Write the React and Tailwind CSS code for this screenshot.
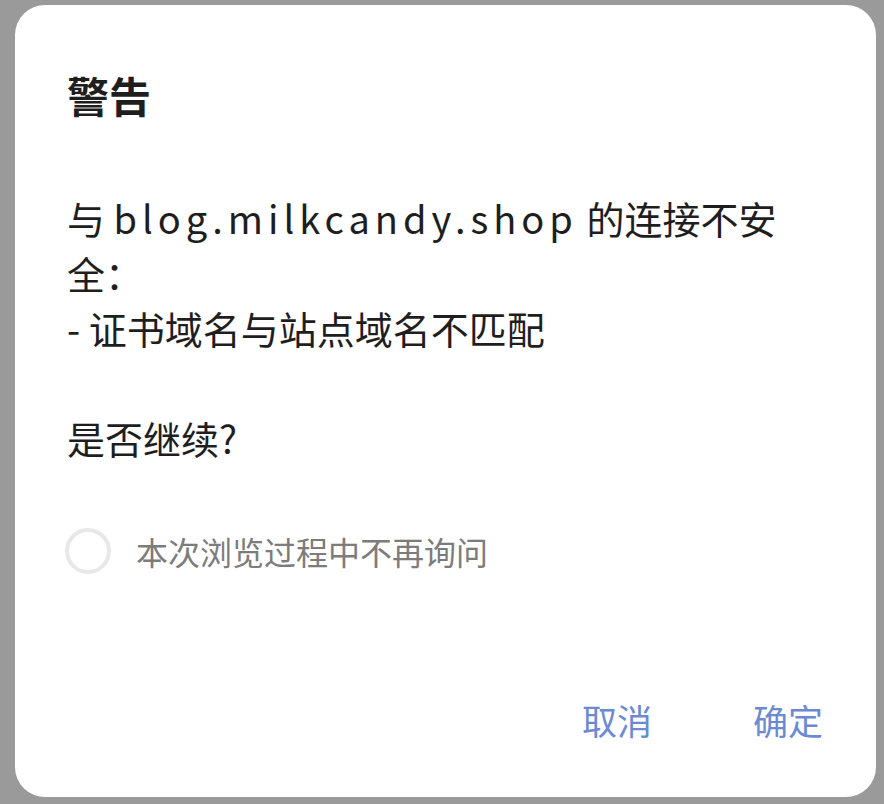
export default function App() {
  const font = { fontFamily: '"Noto Sans CJK SC", "Noto Sans", sans-serif' };

  return (
    <div className="h-[804px] w-[884px] bg-[#9a9a9a] pt-[5px] pl-[15px]" style={font}>
      <div className="flex h-[792px] w-[861px] flex-col rounded-[30px] bg-white pt-[62px] pb-[49px] pl-[52px] pr-[53px]">
        <h1 className="text-[42px] font-bold leading-[56px] text-[#1e1e1e]">警告</h1>

        <div className="mt-[67px] text-[38px] leading-[55px] text-[#1e1e1e]">
          <p>
            与 <span className="tracking-[5px]">blog.milkcandy.shop</span> 的连接不安
          </p>
          <p>全：</p>
          <p>- 证书域名与站点域名不匹配</p>
          <p>&nbsp;</p>
          <p>是否继续?</p>
        </div>

        <label className="mt-[63px] flex h-[46px] items-center gap-[25px] -ml-[2px]">
          <span className="h-[46px] w-[46px] shrink-0 rounded-full border-[4px] border-[#e8e8e8]"></span>
          <span className="text-[32px] text-[#7c7c7c]">本次浏览过程中不再询问</span>
        </label>

        <div className="mt-auto flex h-[56px] items-center justify-end gap-[101px]">
          <button className="text-[35px] text-[#6b8ad3]">取消</button>
          <button className="text-[35px] text-[#6b8ad3]">确定</button>
        </div>
      </div>
    </div>
  );
}
